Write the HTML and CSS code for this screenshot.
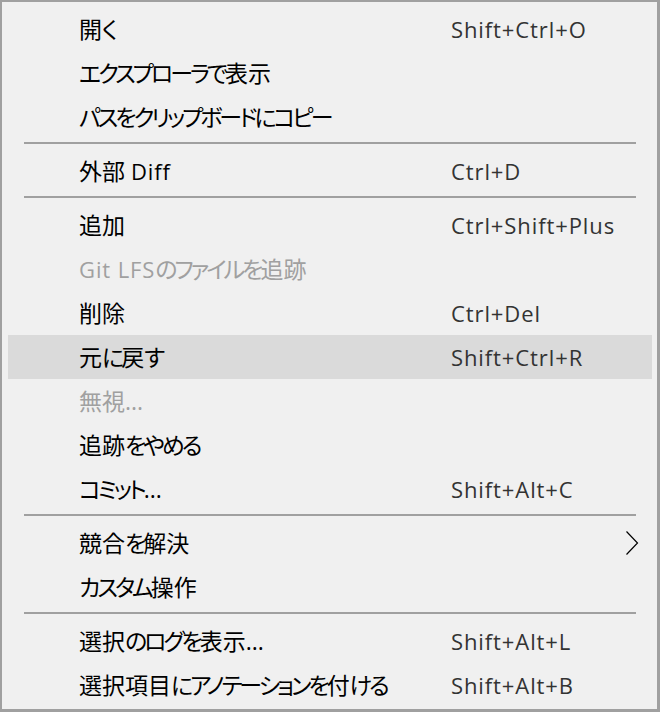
FILE: index.html
```html
<!DOCTYPE html>
<html lang="ja">
<head>
<meta charset="utf-8">
<link rel="stylesheet" href="styles.css">
</head>
<body>
<div class="menu">
  <div class="item"><span class="label">開<span class="k">く</span></span><span class="key">Shift+Ctrl+O</span></div>
  <div class="item"><span class="label"><span class="k">エクスプローラで</span>表示</span></div>
  <div class="item"><span class="label"><span class="k">パスをクリップボードにコピー</span></span></div>
  <div class="sep"></div>
  <div class="item"><span class="label">外部 <span class="lat">Diff</span></span><span class="key">Ctrl+D</span></div>
  <div class="sep"></div>
  <div class="item"><span class="label">追加</span><span class="key">Ctrl+Shift+Plus</span></div>
  <div class="item disabled"><span class="label"><span class="lat">Git LFS</span><span class="k">のファイルを</span>追跡</span></div>
  <div class="item"><span class="label">削除</span><span class="key">Ctrl+Del</span></div>
  <div class="item active"><span class="label">元<span class="k">に</span>戻<span class="k">す</span></span><span class="key">Shift+Ctrl+R</span></div>
  <div class="item disabled"><span class="label">無視...</span></div>
  <div class="item"><span class="label">追跡<span class="k">をやめる</span></span></div>
  <div class="item"><span class="label"><span class="k">コミット</span>...</span><span class="key">Shift+Alt+C</span></div>
  <div class="sep"></div>
  <div class="item"><span class="label">競合<span class="k">を</span>解決</span><span class="key"></span><svg class="arrow" width="14" height="26" viewBox="0 0 14 26"><polyline points="1.5,1.5 12.5,13 1.5,24.5" fill="none" stroke="#000" stroke-width="1.2"/></svg></div>
  <div class="item"><span class="label"><span class="k">カスタム</span>操作</span></div>
  <div class="sep"></div>
  <div class="item"><span class="label">選択<span class="k">のログを</span>表示...</span><span class="key">Shift+Alt+L</span></div>
  <div class="item"><span class="label">選択項目<span class="k">にアノテーションを</span>付<span class="k">ける</span></span><span class="key">Shift+Alt+B</span></div>
</div>
</body>
</html>
```
FILE: styles.css
```css
html, body {
  margin: 0;
  padding: 0;
  background: #f0f0f0;
}
.menu {
  width: 660px;
  height: 712px;
  box-sizing: border-box;
  border-style: solid;
  border-color: #a0a0a0;
  border-width: 2px 3px 3px 2px;
  padding: 5px 5px 2px 6px;
  background: #f0f0f0;
  font-family: "Open Sans", "Noto Sans CJK JP", sans-serif;
  font-size: 22px;
  color: #000;
}
.item {
  height: 44px;
  display: grid;
  grid-template-columns: 372px 1fr auto;
  align-items: center;
  padding-left: 71px;
  padding-right: 13px;
  line-height: 44px;
  white-space: nowrap;
}
.label {
  font-size: 23px;
  font-feature-settings: "palt";
}
.label .k {
  letter-spacing: -3px;
}
.lat {
  font-size: 22px;
  letter-spacing: 0.9px;
}
.item .key {
  color: #333;
  letter-spacing: 0.9px;
}
.item.active {
  background: #dadada;
}
.item.disabled .label {
  color: #a0a0a0;
}
.arrow {
  display: block;
}
.sep {
  height: 10px;
  box-sizing: border-box;
  padding: 3px 16px 0;
}
.sep::before {
  content: "";
  display: block;
  height: 2px;
  background: #a0a0a0;
}
```
